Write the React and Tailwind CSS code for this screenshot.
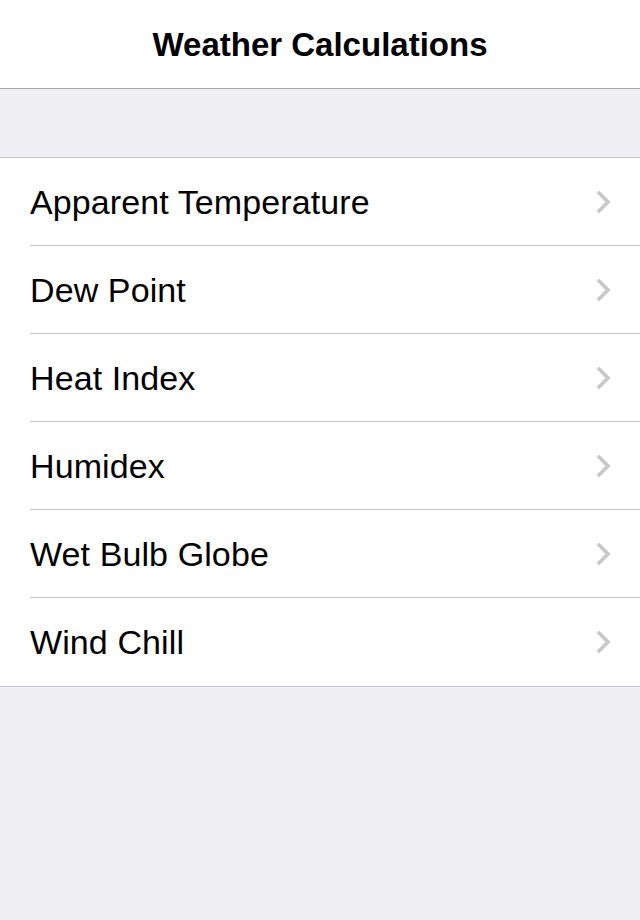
import React from 'react';

const items = ['Apparent Temperature', 'Dew Point', 'Heat Index', 'Humidex', 'Wet Bulb Globe', 'Wind Chill'];

const Chevron = () => (
  <svg width="18" height="26" viewBox="0 0 18 26" className="shrink-0">
    <path d="M4 3 L14 13 L4 23" fill="none" stroke="#c7c7cc" strokeWidth="3.6" strokeLinecap="butt" strokeLinejoin="miter" />
  </svg>
);

export default function App() {
  return (
    <div className="w-[640px] h-[920px] bg-[#efeff4] font-['Liberation_Sans',Arial,sans-serif] text-black">
      <header className="h-[89px] bg-white border-b border-[#a7a7aa] flex items-center justify-center">
        <h1 className="text-[33px] font-bold leading-none">Weather Calculations</h1>
      </header>
      <div className="h-[68px]" />
      <ul className="bg-white border-t border-b border-[#c8c7cc]">
        {items.map((item, i) => (
          <li key={item} className="pl-[30px]">
            <div className={`h-[88px] flex items-center justify-between pr-[28px] ${i < items.length - 1 ? 'border-b border-[#c8c7cc]' : ''}`}>
              <span className="text-[34px] leading-none tracking-[0.1px]">{item}</span>
              <Chevron />
            </div>
          </li>
        ))}
      </ul>
    </div>
  );
}
